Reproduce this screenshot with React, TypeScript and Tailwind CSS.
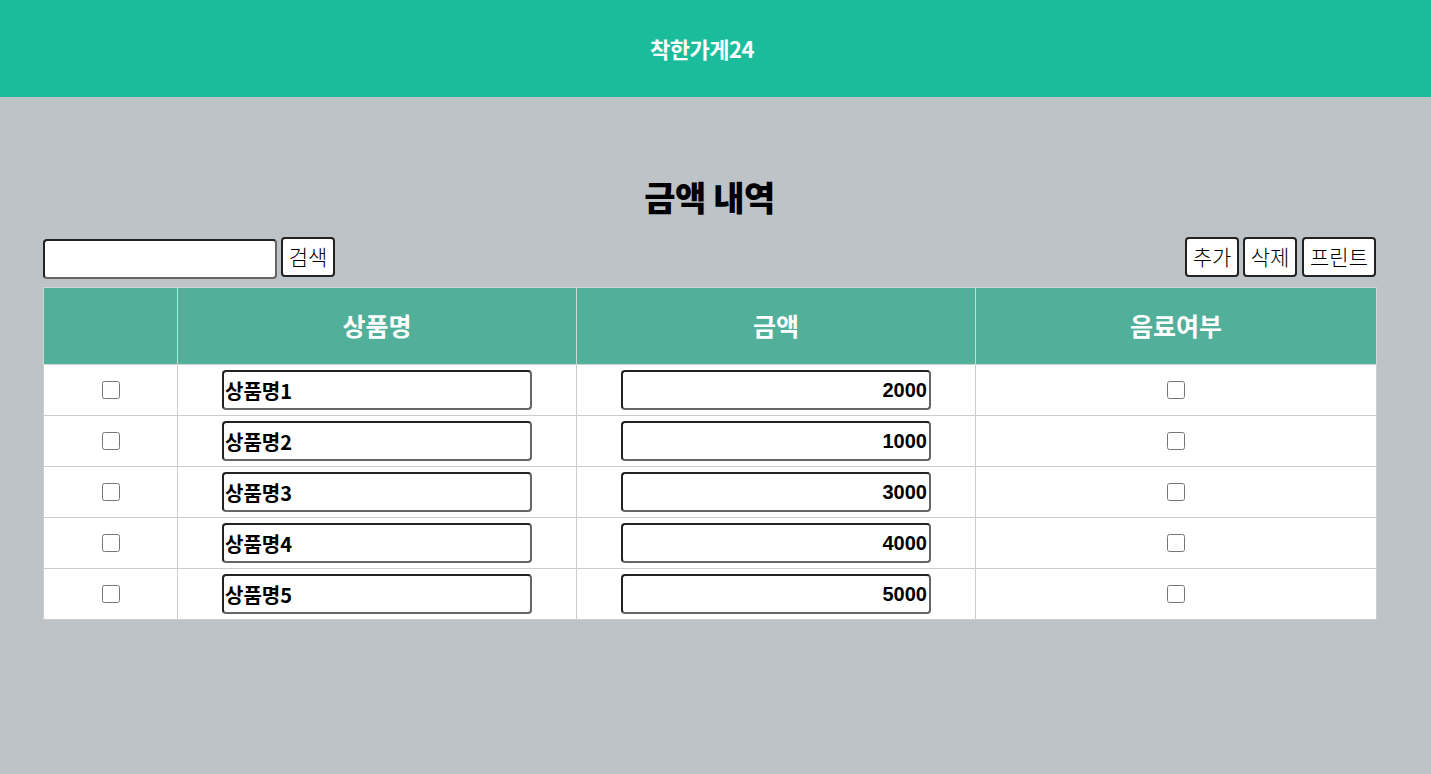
const items = [
  { name: "상품명1", price: "2000" },
  { name: "상품명2", price: "1000" },
  { name: "상품명3", price: "3000" },
  { name: "상품명4", price: "4000" },
  { name: "상품명5", price: "5000" },
];

const font = "font-['Noto_Sans_CJK_KR',sans-serif]";

export default function App() {
  return (
    <main className={`min-h-screen bg-[#bdc3c7] ${font}`}>
      {/* 헤더 */}
      <header className="h-[97px] bg-[#1bbc9b] flex items-center justify-center">
        <h1 className="text-[22px] font-bold text-white tracking-[-0.5px] mr-[27px]">착한가게24</h1>
      </header>

      <section className="w-[1333px] ml-[43px] pt-[82px]">
        <h2 className="text-center text-[34px] leading-[36px] font-black text-black tracking-[-0.5px]">금액 내역</h2>

        {/* 툴바 */}
        <div className="mt-[22px] flex items-start justify-between">
          <div className="flex items-start gap-[4px]">
            <input
              type="text"
              className="mt-[2px] w-[234px] h-[40px] bg-white border-2 border-t-[#222] border-l-[#222] border-r-[#666] border-b-[#666] rounded-[4px] px-2 text-[18px] outline-none"
            />
            <button className="h-[40px] w-[54px] bg-white border-2 border-[#222] rounded-[4px] text-[21px] font-light text-black">
              검색
            </button>
          </div>
          <div className="flex items-start gap-[4px]">
            <button className="h-[40px] w-[54px] bg-white border-2 border-[#222] rounded-[4px] text-[21px] font-light text-black">
              추가
            </button>
            <button className="h-[40px] w-[54px] bg-white border-2 border-[#222] rounded-[4px] text-[21px] font-light text-black">
              삭제
            </button>
            <button className="ml-[1px] h-[40px] w-[74px] bg-white border-2 border-[#222] rounded-[4px] text-[21px] font-light text-black">
              프린트
            </button>
          </div>
        </div>

        {/* 테이블 */}
        <table className="mt-[8px] w-[1333px] table-fixed border-collapse bg-white border border-[#d5dedb]">
          <colgroup>
            <col className="w-[134px]" />
            <col className="w-[399px]" />
            <col className="w-[399px]" />
            <col className="w-[401px]" />
          </colgroup>
          <thead>
            <tr className="h-[77px] bg-[#52b09a] text-white text-[25px] font-bold">
              <th className="border border-[#cfd8d5]"></th>
              <th className="border border-[#cfd8d5]">상품명</th>
              <th className="border border-[#cfd8d5]">금액</th>
              <th className="border border-[#cfd8d5]">음료여부</th>
            </tr>
          </thead>
          <tbody>
            {items.map((it) => (
              <tr key={it.name} className="h-[51px]">
                <td className="border border-[#cccccc] align-middle">
                  <input type="checkbox" className="block mx-auto w-[18px] h-[18px] accent-gray-500" />
                </td>
                <td className="border border-[#cccccc] text-center">
                  <input
                    type="text"
                    defaultValue={it.name}
                    className="w-[310px] h-[40px] bg-white border-2 border-t-[#222] border-l-[#222] border-r-[#666] border-b-[#666] rounded-[4px] px-[1px] text-[20px] font-bold text-black outline-none"
                  />
                </td>
                <td className="border border-[#cccccc] text-center">
                  <input
                    type="text"
                    defaultValue={it.price}
                    className="w-[310px] h-[40px] bg-white border-2 border-t-[#222] border-l-[#222] border-r-[#666] border-b-[#666] rounded-[4px] px-[2px] text-right text-[20px] font-bold text-black outline-none font-['Liberation_Sans',sans-serif]"
                  />
                </td>
                <td className="border border-[#cccccc] align-middle">
                  <input type="checkbox" className="block mx-auto w-[18px] h-[18px] accent-gray-500" />
                </td>
              </tr>
            ))}
          </tbody>
        </table>
      </section>
    </main>
  );
}
